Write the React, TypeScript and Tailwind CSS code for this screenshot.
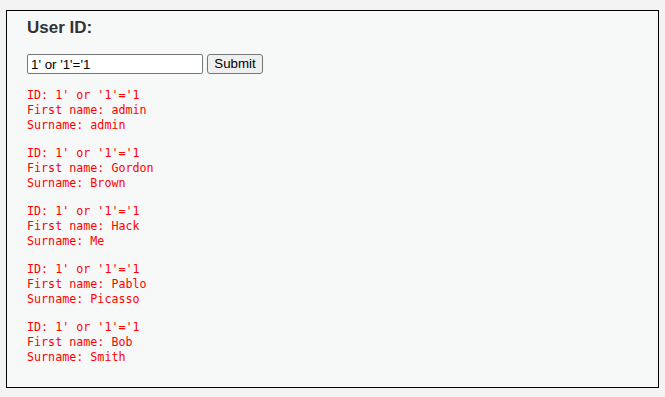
const rows = [
  { first: "admin", last: "admin" },
  { first: "Gordon", last: "Brown" },
  { first: "Hack", last: "Me" },
  { first: "Pablo", last: "Picasso" },
  { first: "Bob", last: "Smith" },
];

export default function App() {
  return (
    <div className="min-h-[397px] w-[665px] bg-[#f3f3f3] pt-[10px] pl-[6px] font-['Liberation_Sans',Arial,sans-serif]">
      <div className="h-[378px] w-[653px] border border-black bg-[#f7f8f8] pl-[20px] pt-[7px]">
        <h1 className="text-[17px] font-bold leading-[20px] text-[#333]">User ID:</h1>
        <form className="mt-[16px] flex items-center gap-[4px]" onSubmit={(e) => e.preventDefault()}>
          <input
            defaultValue="1' or '1'='1"
            className="h-[20px] w-[176px] rounded-[2px] border border-[#767676] bg-white px-[3px] text-[13.3px] text-black outline-none"
          />
          <button className="h-[20px] w-[56px] rounded-[3px] border border-[#767676] bg-[#efefef] text-[13.3px] leading-none text-black">
            Submit
          </button>
        </form>
        <div className="mt-[14px] flex flex-col gap-[13px] text-[11.7px] leading-[15px] text-[#ff0000]">
          {rows.map((r) => (
            <pre key={r.first} className="font-['DejaVu_Sans_Mono',monospace]">
              {`ID: 1' or '1'='1\nFirst name: ${r.first}\nSurname: ${r.last}`}
            </pre>
          ))}
        </div>
      </div>
    </div>
  );
}
